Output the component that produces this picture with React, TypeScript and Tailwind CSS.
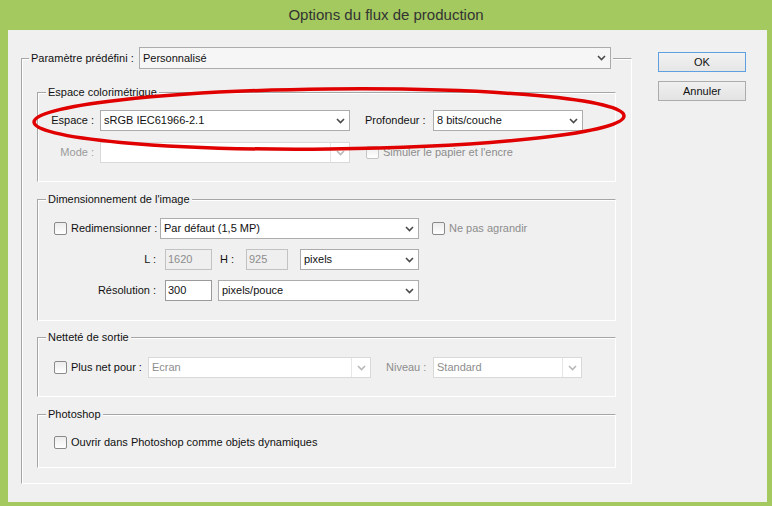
import React from "react";

function Chevron({ disabled }: { disabled?: boolean }) {
  return (
    <svg width="9" height="6" viewBox="0 0 9 6" className="block">
      <path
        d="M1 1 L4.5 4.5 L8 1"
        fill="none"
        stroke={disabled ? "#b8b8b8" : "#4a4a4a"}
        strokeWidth="1.6"
      />
    </svg>
  );
}

function Select({
  value,
  className,
  disabled,
}: {
  value?: string;
  className: string;
  disabled?: boolean;
}) {
  return (
    <div
      className={`flex items-center border bg-white ${
        disabled ? "border-[#d9d9d9] text-[#8d8d8d]" : "border-[#acacac] text-[#111]"
      } ${className}`}
    >
      <span className="flex-1 truncate pl-[3px]">{value}</span>
      {disabled && <span className="h-full w-px bg-[#e6e6e6]" />}
      <span className="flex w-[18px] justify-center">
        <Chevron disabled={disabled} />
      </span>
    </div>
  );
}

function Check({ disabled }: { disabled?: boolean }) {
  return (
    <span
      className={`block h-[13px] w-[13px] shrink-0 rounded-[2px] border bg-gradient-to-b from-[#ececec] to-white ${
        disabled ? "border-[#c4c4c4]" : "border-[#8a8a8a]"
      }`}
    />
  );
}

function Group({
  title,
  className,
  children,
}: {
  title: string;
  className: string;
  children: React.ReactNode;
}) {
  return (
    <fieldset
      className={`min-w-0 border border-t-[#a6a6a6] border-l-[#a6a6a6] border-r-white border-b-white shadow-[inset_1px_1px_0_#fff] ${className}`}
    >
      <legend className="ml-[8px] bg-[#f0f0f0] px-[2px] leading-[14px] text-[#111]">{title}</legend>
      {children}
    </fieldset>
  );
}

export default function App() {
  return (
    <div className="relative flex h-[506px] w-[772px] flex-col bg-[#a3c95f] font-['Liberation_Sans',Arial,sans-serif] text-[11px]">
      {/* Barre de titre */}
      <div className="flex h-[30px] items-center justify-center text-[15px] text-[#333]">
        Options du flux de production
      </div>

      {/* Contenu */}
      <div className="mb-[4px] ml-[8px] mr-[5px] flex flex-1 bg-[#f0f0f0] pl-[13px] pt-[17px]">
        <fieldset className="h-fit w-[611px] min-w-0 border border-t-[#a6a6a6] border-l-[#a6a6a6] border-r-white border-b-white shadow-[inset_1px_1px_0_#fff]">
          <legend className="ml-[7px] bg-[#f0f0f0] px-[2px]">
            <div className="flex items-center">
              <span className="w-[108px] text-[#111]">Paramètre prédéfini :</span>
              <Select value="Personnalisé" className="h-[22px] w-[472px] !bg-[#f6f6f6]" />
            </div>
          </legend>

          <div className="flex flex-col px-[15px] pb-[15px] pt-[16px]">
            <Group title="Espace colorimétrique" className="pb-[18px] pt-[11px]">
              <div className="flex h-[21px] items-center">
                <span className="mr-[6px] w-[56px] text-right text-[#111]">Espace :</span>
                <Select value="sRGB IEC61966-2.1" className="h-[21px] w-[250px]" />
                <span className="ml-[15px] mr-[6px] w-[62px] text-[#111]">Profondeur :</span>
                <Select value="8 bits/couche" className="h-[21px] w-[150px]" />
              </div>
              <div className="mt-[11px] flex h-[21px] items-center">
                <span className="mr-[6px] w-[56px] text-right text-[#9a9a9a]">Mode :</span>
                <Select className="h-[21px] w-[250px]" disabled />
                <span className="ml-[16px]">
                  <Check disabled />
                </span>
                <span className="ml-[4px] text-[#8d8d8d]">Simuler le papier et l'encre</span>
              </div>
            </Group>

            <Group title="Dimensionnement de l'image" className="mt-[10px] pb-[19px] pt-[12px]">
              <div className="flex h-[21px] items-center">
                <span className="ml-[16px]">
                  <Check />
                </span>
                <span className="ml-[4px] w-[89px] text-[#111]">Redimensionner :</span>
                <Select value="Par défaut (1,5 MP)" className="h-[21px] w-[259px]" />
                <span className="ml-[13px]">
                  <Check />
                </span>
                <span className="ml-[4px] text-[#8d8d8d]">Ne pas agrandir</span>
              </div>
              <div className="mt-[10px] flex h-[21px] items-center">
                <span className="w-[118px] text-right text-[#111]">L :</span>
                <div className="ml-[9px] flex h-[21px] w-[47px] items-center border border-[#c2c2c2] bg-[#efefef] pl-[2px] text-[#8d8d8d]">
                  1620
                </div>
                <span className="ml-[8px] w-[17px] text-[#111]">H :</span>
                <div className="ml-[9px] flex h-[21px] w-[42px] items-center border border-[#c2c2c2] bg-[#efefef] pl-[2px] text-[#8d8d8d]">
                  925
                </div>
                <Select value="pixels" className="ml-[12px] h-[21px] w-[119px]" />
              </div>
              <div className="mt-[10px] flex h-[21px] items-center">
                <span className="w-[118px] text-right text-[#111]">Résolution :</span>
                <div className="ml-[9px] flex h-[21px] w-[47px] items-center border border-[#9a9a9a] bg-white pl-[2px] text-[#111]">
                  300
                </div>
                <Select value="pixels/pouce" className="ml-[6px] h-[21px] w-[201px]" />
              </div>
            </Group>

            <Group title="Netteté de sortie" className="mt-[9px] pb-[18px] pt-[13px]">
              <div className="flex h-[21px] items-center">
                <span className="ml-[16px]">
                  <Check />
                </span>
                <span className="ml-[4px] w-[77px] text-[#111]">Plus net pour :</span>
                <Select value="Ecran" className="h-[21px] w-[223px]" disabled />
                <span className="ml-[15px] w-[47px] text-[#8d8d8d]">Niveau :</span>
                <Select value="Standard" className="h-[21px] w-[149px]" disabled />
              </div>
            </Group>

            <Group title="Photoshop" className="mt-[10px] pb-[16px] pt-[13px]">
              <div className="flex h-[17px] items-center">
                <span className="ml-[16px]">
                  <Check />
                </span>
                <span className="ml-[4px] text-[#111]">Ouvrir dans Photoshop comme objets dynamiques</span>
              </div>
            </Group>
          </div>
        </fieldset>

        {/* Boutons */}
        <div className="ml-[26px] flex flex-col gap-[9px] pt-[5px]">
          <button className="h-[20px] w-[88px] border border-[#5fa0e0] bg-gradient-to-b from-[#f2f2f2] to-[#e6e6e6] text-[#111]">
            OK
          </button>
          <button className="h-[20px] w-[88px] border border-[#acacac] bg-gradient-to-b from-[#f0f0f0] to-[#e3e3e3] text-[#111]">
            Annuler
          </button>
        </div>
      </div>

      {/* Annotation rouge */}
      <svg className="pointer-events-none absolute left-0 top-0" width="772" height="506">
        <ellipse
          cx="329"
          cy="119"
          rx="295"
          ry="30"
          fill="none"
          stroke="#e00000"
          strokeWidth="3.5"
          transform="rotate(-0.6 329 119)"
        />
      </svg>
    </div>
  );
}
